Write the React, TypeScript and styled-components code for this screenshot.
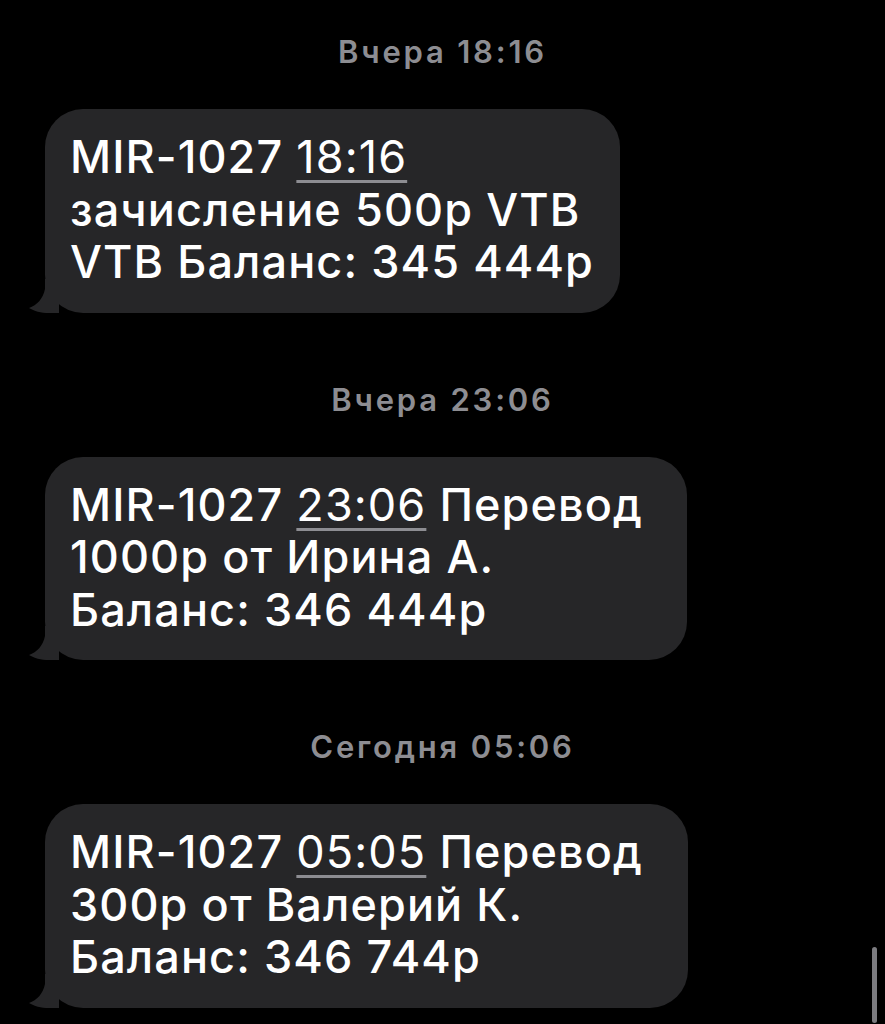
import styled, { createGlobalStyle } from "styled-components";

const GlobalStyle = createGlobalStyle`
    html, body {
        margin: 0;
        padding: 0;
        background: #000;
    }
    body {
        font-family: Inter, "Noto Sans", "Liberation Sans", sans-serif;
        -webkit-font-smoothing: antialiased;
    }
`;

const Screen = styled.div`
    position: relative;
    width: 885px;
    height: 1024px;
    overflow: hidden;
    background: #000;
`;

const Thread = styled.div`
    display: flex;
    flex-direction: column;
    align-items: flex-start;
    padding: 32px 0 0 45px;
`;

const Stamp = styled.div`
    align-self: stretch;
    margin-left: -45px;
    text-align: center;
    color: #8d8d92;
    font-size: 31px;
    font-weight: 600;
    line-height: 40px;
    letter-spacing: 2.8px;
    margin-bottom: 37px;
`;

const Bubble = styled.div<{ $width: number }>`
    position: relative;
    width: ${(p) => p.$width}px;
    box-sizing: border-box;
    background: #262628;
    border-radius: 38px;
    padding: 22px 0 24px 25px;
    color: #fff;
    font-size: 45px;
    font-weight: 500;
    line-height: 52.5px;
    letter-spacing: 1.1px;
    margin-bottom: 67px;
`;

const Line = styled.div`
    white-space: nowrap;
`;

const Tail = styled.svg`
    position: absolute;
    left: -16px;
    bottom: 0;
    width: 40px;
    height: 34px;
`;

const Time = styled.span`
    font-weight: 400;
    text-decoration: underline;
    text-decoration-color: #8d8d92;
    text-decoration-thickness: 3px;
    text-underline-offset: 7px;
`;

const Scroll = styled.div`
    position: absolute;
    right: 8px;
    top: 947px;
    width: 5px;
    height: 76px;
    border-radius: 3px;
    background: #7c7c80;
`;

type Msg = { stamp: string; time: string; lines: string[]; first: string; width: number };

const messages: Msg[] = [
    {
        stamp: "Вчера 18:16",
        time: "18:16",
        first: "",
        lines: ["зачисление 500р VTB", "VTB Баланс: 345 444р"],
        width: 575,
    },
    {
        stamp: "Вчера 23:06",
        time: "23:06",
        first: " Перевод",
        lines: ["1000р от Ирина А.", "Баланс: 346 444р"],
        width: 642,
    },
    {
        stamp: "Сегодня 05:06",
        time: "05:05",
        first: " Перевод",
        lines: ["300р от Валерий К.", "Баланс: 346 744р"],
        width: 643,
    },
];

function TailShape() {
    return (
        <Tail viewBox="0 0 40 34">
            <path d="M16 0 L30 0 L30 34 L20 34 C12 34 5 32 0 29 C8 26 14 20 16 10 Z" fill="#262628" />
        </Tail>
    );
}

export default function App() {
    return (
        <Screen>
            <GlobalStyle />
            <Thread>
                {messages.map((m) => (
                    <div key={m.stamp} style={{ display: "contents" }}>
                        <Stamp>{m.stamp}</Stamp>
                        <Bubble $width={m.width}>
                            <TailShape />
                            <Line>
                                MIR-1027 <Time>{m.time}</Time>
                                {m.first}
                            </Line>
                            {m.lines.map((l) => (
                                <Line key={l}>{l}</Line>
                            ))}
                        </Bubble>
                    </div>
                ))}
            </Thread>
            <Scroll />
        </Screen>
    );
}
